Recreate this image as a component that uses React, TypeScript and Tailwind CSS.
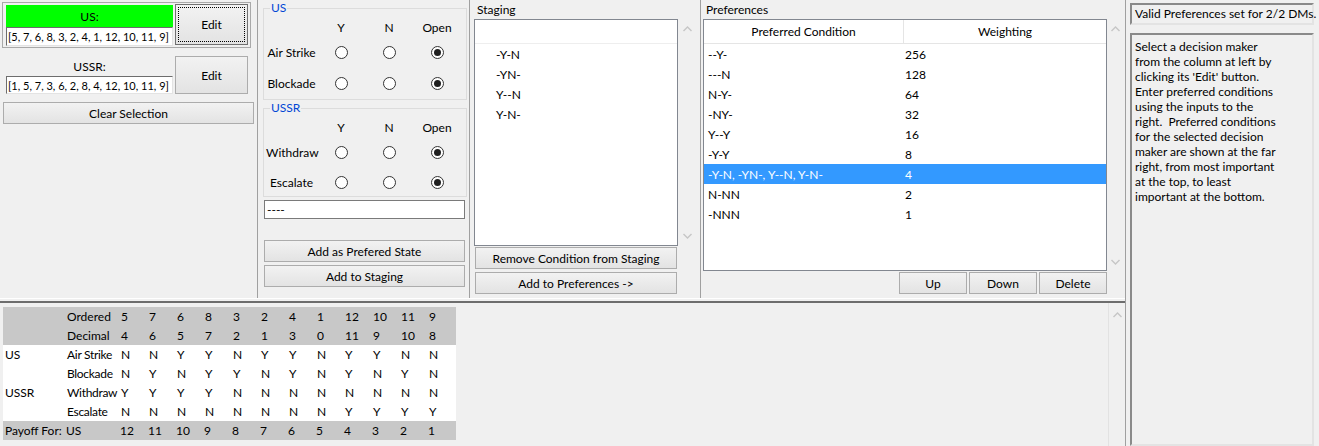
import React from 'react';

const ordered = [5, 7, 6, 8, 3, 2, 4, 1, 12, 10, 11, 9];
const decimal = [4, 6, 5, 7, 2, 1, 3, 0, 11, 9, 10, 8];
const payoff = [12, 11, 10, 9, 8, 7, 6, 5, 4, 3, 2, 1];

const optionRows = [
  { dm: 'US', option: 'Air Strike', vals: 'NNYYNYYNYYNN' },
  { dm: '', option: 'Blockade', vals: 'NYNYYNYNYNYN' },
  { dm: 'USSR', option: 'Withdraw', vals: 'YYYYNNNNNNNN' },
  { dm: '', option: 'Escalate', vals: 'NNNNNNNNYYYY' },
];

const preferences = [
  { cond: '--Y-', weight: 256 },
  { cond: '---N', weight: 128 },
  { cond: 'N-Y-', weight: 64 },
  { cond: '-NY-', weight: 32 },
  { cond: 'Y--Y', weight: 16 },
  { cond: '-Y-Y', weight: 8 },
  { cond: '-Y-N, -YN-, Y--N, Y-N-', weight: 4, selected: true },
  { cond: 'N-NN', weight: 2 },
  { cond: '-NNN', weight: 1 },
];

const staging = ['-Y-N', '-YN-', 'Y--N', 'Y-N-'];

const helpLines = [
  'Select a decision maker',
  'from the column at left by',
  "clicking its 'Edit' button.",
  'Enter preferred conditions',
  'using the inputs to the',
  'right.  Preferred conditions',
  'for the selected decision',
  'maker are shown at the far',
  'right, from most important',
  'at the top, to least',
  'important at the bottom.',
];

function WinButton({ label, className = '' }: { label: string; className?: string }) {
  return (
    <div
      className={`flex items-center justify-center border border-[#acacac] bg-linear-to-b from-[#f2f2f2] to-[#e3e3e3] text-black ${className}`}
    >
      {label}
    </div>
  );
}

function Chevron({ up }: { up?: boolean }) {
  return (
    <svg width="9" height="6" viewBox="0 0 9 6">
      <polyline
        points={up ? '0.5,5 4.5,1 8.5,5' : '0.5,1 4.5,5 8.5,1'}
        fill="none"
        stroke="#c6c6c6"
        strokeWidth="1.4"
      />
    </svg>
  );
}

function Radio({ checked }: { checked?: boolean }) {
  return (
    <div className="flex h-[13px] w-[13px] items-center justify-center rounded-full border border-[#333333] bg-white">
      {checked && <div className="h-[7px] w-[7px] rounded-full bg-[#1f1f1f]" />}
    </div>
  );
}

function OptionGroup({
  title,
  options,
  rowHeights,
}: {
  title: string;
  options: string[];
  rowHeights: string[];
}) {
  return (
    <div className="relative ml-[5px] w-[204px] border border-[#dcdcdc]">
      <span className="absolute left-[6px] top-[-9px] bg-[#f0f0f0] px-[1px] leading-[15px] text-[#0046d5]">
        {title}
      </span>
      <div className="mt-[8px] grid h-[20px] grid-cols-[51px_48px_48px_48px] items-center pl-[2px] text-center">
        <span />
        <span>Y</span>
        <span>N</span>
        <span>Open</span>
      </div>
      {options.map((opt, i) => (
        <div
          key={opt}
          className={`grid grid-cols-[51px_48px_48px_48px] items-center pl-[2px] ${rowHeights[i]}`}
        >
          <span className="text-center">{opt}</span>
          <div className="flex justify-center">
            <Radio />
          </div>
          <div className="flex justify-center">
            <Radio />
          </div>
          <div className="flex justify-center">
            <Radio checked />
          </div>
        </div>
      ))}
    </div>
  );
}

export default function App() {
  return (
    <div className="flex h-[446px] w-[1319px] overflow-hidden bg-[#f0f0f0] font-['Lato','Segoe_UI',sans-serif] text-[12px] leading-[15px] text-black">
      {/* Main area */}
      <div className="flex w-[1126px] flex-col border-r border-[#a0a0a0]">
        {/* Top section */}
        <div className="flex h-[298px]">
          {/* Decision makers */}
          <div className="flex w-[258px] flex-col border-r border-[#a0a0a0]">
            <div className="ml-[2px] mt-[2px] flex h-[46px] w-[249px] border border-[#a9a9a9] pl-[3px]">
              <div className="mt-[2px] flex w-[167px] flex-col">
                <div className="flex h-[22px] items-center justify-center bg-[#00ff00]">US:</div>
                <div className="flex h-[19px] items-center overflow-hidden whitespace-nowrap border border-b-[#e3e3e3] border-l-[#6d6d6d] border-r-[#e3e3e3] border-t-[#6d6d6d] bg-white pl-[1px] text-[11px]">
                  [5, 7, 6, 8, 3, 2, 4, 1, 12, 10, 11, 9]
                </div>
              </div>
              <div className="ml-[2px] mt-[1px] h-[41px] w-[73px] border border-[#707070] bg-linear-to-b from-[#f2f2f2] to-[#e3e3e3] p-[2px]">
                <div className="flex h-full w-full items-center justify-center border border-dotted border-black">
                  Edit
                </div>
              </div>
            </div>
            <div className="mt-[8px] flex">
              <div className="ml-[6px] flex w-[167px] flex-col">
                <div className="flex h-[20px] items-center justify-center">USSR:</div>
                <div className="flex h-[18px] items-center overflow-hidden whitespace-nowrap border border-b-[#e3e3e3] border-l-[#6d6d6d] border-r-[#e3e3e3] border-t-[#6d6d6d] bg-white pl-[1px] text-[11px]">
                  [1, 5, 7, 3, 6, 2, 8, 4, 12, 10, 11, 9]
                </div>
              </div>
              <WinButton label="Edit" className="ml-[2px] h-[38px] w-[73px]" />
            </div>
            <WinButton label="Clear Selection" className="ml-[3px] mt-[8px] h-[22px] w-[251px]" />
          </div>

          {/* Condition builder */}
          <div className="flex w-[212px] flex-col border-r border-[#a0a0a0]">
            <div className="mt-[8px]">
              <OptionGroup
                title="US"
                options={['Air Strike', 'Blockade']}
                rowHeights={['h-[30px]', 'h-[32px]']}
              />
            </div>
            <div className="mt-[8px]">
              <OptionGroup
                title="USSR"
                options={['Withdraw', 'Escalate']}
                rowHeights={['h-[31px]', 'h-[28px]']}
              />
            </div>
            <div className="ml-[6px] mt-[3px] flex h-[19px] w-[201px] items-center border border-[#7a7a7a] bg-white pl-[2px]">
              ----
            </div>
            <WinButton label="Add as Prefered State" className="ml-[6px] mt-[21px] h-[22px] w-[201px]" />
            <WinButton label="Add to Staging" className="ml-[6px] mt-[3px] h-[22px] w-[201px]" />
          </div>

          {/* Staging */}
          <div className="flex w-[231px] flex-col border-r border-[#a0a0a0]">
            <div className="h-[19px] pl-[7px] leading-[19px]">Staging</div>
            <div className="flex">
              <div className="ml-[4px] h-[227px] w-[204px] border border-[#828790] bg-white">
                <div className="h-[24px] border-b border-[#eeeeee]" />
                {staging.map((s) => (
                  <div key={s} className="flex h-[20px] items-center pl-[21px]">
                    {s}
                  </div>
                ))}
              </div>
              <div className="flex h-[227px] w-[18px] flex-col items-center justify-between py-[7px]">
                <Chevron up />
                <Chevron />
              </div>
            </div>
            <WinButton label="Remove Condition from Staging" className="ml-[5px] mt-[1px] h-[22px] w-[202px]" />
            <WinButton label="Add to Preferences ->" className="ml-[5px] mt-[3px] h-[22px] w-[202px]" />
          </div>

          {/* Preferences */}
          <div className="flex flex-1 flex-col">
            <div className="h-[19px] pl-[5px] leading-[19px]">Preferences</div>
            <div className="flex">
              <div className="ml-[2px] h-[252px] w-[404px] border border-[#828790] bg-white">
                <div className="flex h-[24px] border-b border-[#e5e5e5]">
                  <div className="flex w-[200px] items-center justify-center border-r border-[#e5e5e5]">
                    Preferred Condition
                  </div>
                  <div className="flex flex-1 items-center justify-center">Weighting</div>
                </div>
                {preferences.map((p) => (
                  <div
                    key={p.cond}
                    className={`flex h-[20px] items-center ${p.selected ? 'bg-[#3399ff] text-white' : ''}`}
                  >
                    <div className="w-[200px] pl-[4px]">{p.cond}</div>
                    <div className="pl-[1px]">{p.weight}</div>
                  </div>
                ))}
              </div>
              <div className="flex h-[252px] w-[17px] flex-col items-center justify-between pb-[6px] pt-[7px]">
                <Chevron up />
                <Chevron />
              </div>
            </div>
            <div className="ml-[2px] mt-[1px] flex w-[404px] justify-end gap-[2px]">
              <WinButton label="Up" className="h-[22px] w-[68px]" />
              <WinButton label="Down" className="h-[22px] w-[68px]" />
              <WinButton label="Delete" className="h-[22px] w-[68px]" />
            </div>
          </div>
        </div>

        {/* Splitter */}
        <div className="h-[5px] border-b-2 border-t border-b-[#6d6d6d] border-t-white" />

        {/* Bottom section: state table */}
        <div className="flex flex-1">
          <div className="flex-1 pl-[3px] pt-[4px]">
            <table className="border-collapse">
              <tbody>
                <tr className="h-[19px] bg-[#c8c8c8]">
                  <td className="w-[63px] p-0" />
                  <td className="w-[54px] p-0 pl-[1px]">Ordered</td>
                  {ordered.map((n, i) => (
                    <td key={i} className="w-[28px] p-0 pl-[1px]">
                      {n}
                    </td>
                  ))}
                </tr>
                <tr className="h-[19px] bg-[#c8c8c8]">
                  <td className="p-0" />
                  <td className="p-0 pl-[1px]">Decimal</td>
                  {decimal.map((n, i) => (
                    <td key={i} className="p-0 pl-[1px]">
                      {n}
                    </td>
                  ))}
                </tr>
                {optionRows.map((r) => (
                  <tr key={r.option} className="h-[19px] bg-white">
                    <td className="p-0 pl-[2px]">{r.dm}</td>
                    <td className="whitespace-nowrap p-0 pl-[1px] tracking-[-0.3px]">{r.option}</td>
                    {r.vals.split('').map((v, i) => (
                      <td key={i} className="p-0 pl-[1px]">
                        {v}
                      </td>
                    ))}
                  </tr>
                ))}
                <tr className="h-[19px] bg-[#c8c8c8]">
                  <td className="whitespace-nowrap p-0 pl-[2px]">Payoff For:</td>
                  <td className="p-0">US</td>
                  {payoff.map((n, i) => (
                    <td key={i} className="p-0">
                      {n}
                    </td>
                  ))}
                </tr>
              </tbody>
            </table>
          </div>
          <div className="flex w-[17px] justify-center border-l border-[#e2e2e2] pt-[9px]">
            <Chevron up />
          </div>
        </div>
      </div>

      {/* Status and help */}
      <div className="flex flex-1 flex-col pl-[4px]">
        <div className="mt-[3px] flex h-[22px] w-[184px] items-center whitespace-nowrap border-2 border-b-[#e3e3e3] border-l-[#8a8a8a] border-r-[#e3e3e3] border-t-[#8a8a8a] pl-[3px]">
          Valid Preferences set for 2/2 DMs.
        </div>
        <div className="mt-[8px] h-[420px] w-[184px] border-2 border-b-[#e3e3e3] border-l-[#8a8a8a] border-r-[#e3e3e3] border-t-[#8a8a8a] pl-[3px] pt-[4px]">
          {helpLines.map((l) => (
            <div key={l} className="whitespace-pre">
              {l}
            </div>
          ))}
        </div>
      </div>
    </div>
  );
}
